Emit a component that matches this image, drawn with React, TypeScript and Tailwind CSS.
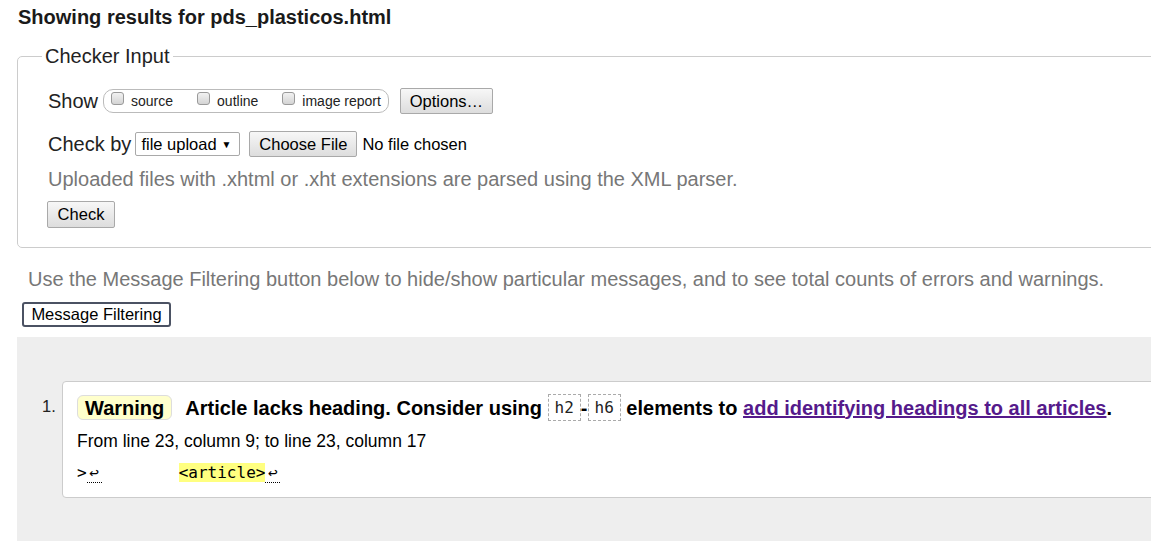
import React from 'react'

const sans = "font-['Liberation_Sans',Arial,sans-serif]"
const mono = "font-['DejaVu_Sans_Mono',Consolas,monospace]"

// grey gradient push button, like the old Chrome default
const btn =
  'flex items-center justify-center border border-[#a9a9a9] rounded-[2px] bg-linear-to-b from-[#f7f7f7] to-[#dddddd] text-[16.5px] leading-none text-black'

function FakeCheckbox({ label }: { label: string }) {
  return (
    <span className="flex items-center gap-[7px]">
      <span className="-mt-[5px] w-[13px] h-[13px] rounded-[3px] border border-[#9a9a9a] bg-linear-to-b from-[#f2f2f2] to-[#d4d4d4]" />
      <span className="text-[14px] leading-none text-[#222]">{label}</span>
    </span>
  )
}

function CodeTag({ children }: { children: React.ReactNode }) {
  return (
    <span
      className={`${mono} inline-flex items-center h-[27px] px-[6px] border border-dashed border-[#aaa] text-[16px] font-normal text-[#222]`}
    >
      {children}
    </span>
  )
}

function ReturnMark() {
  return <span className="inline-block w-[15px] border-b border-dotted border-black text-center">↩</span>
}

export default function App() {
  return (
    <div className={`${sans} w-[1151px] h-[559px] overflow-hidden bg-white text-[#222]`}>
      <div className="w-[1260px] pl-[17px]">
        <h2 className="pt-[6px] pl-[1px] text-[20px] leading-[23px] font-bold text-[#1a1a1a]">
          Showing results for pds_plasticos.html
        </h2>

        {/* Checker input form */}
        <fieldset className="mt-[15px] border border-[#ccc] rounded-[5px]">
          <legend className="ml-[24px] px-[3px] text-[20px] leading-[24px] text-[#222]">Checker Input</legend>
          <div className="pl-[30px] pt-[20px] pb-[19px]">
            <div className="flex items-center h-[26px]">
              <span className="text-[20px] leading-none">Show</span>
              <div className="ml-[5px] h-[24px] flex items-center gap-[24px] px-[7px] border border-[#bbb] rounded-[10px]">
                <FakeCheckbox label="source" />
                <FakeCheckbox label="outline" />
                <FakeCheckbox label="image report" />
              </div>
              <div className={`${btn} ml-[11px] w-[93px] h-[26px]`}>Options…</div>
            </div>

            <div className="mt-[17px] flex items-center h-[26px]">
              <span className="text-[20px] leading-none">Check by</span>
              <div className="ml-[4px] w-[105px] h-[24px] flex items-center justify-between px-[5px] border border-[#a9a9a9] rounded-[2px] bg-white text-[16.5px] text-black">
                <span>file upload</span>
                <span className="text-[10px] pr-[3px]">▼</span>
              </div>
              <div className={`${btn} ml-[9px] w-[108px] h-[26px]`}>Choose File</div>
              <span className="ml-[5px] text-[16.5px] text-black">No file chosen</span>
            </div>

            <p className="mt-[11px] text-[20px] leading-[23px] text-[#777]">
              Uploaded files with .xhtml or .xht extensions are parsed using the XML parser.
            </p>

            <div className={`${btn} mt-[10px] -ml-[1px] w-[68px] h-[27px]`}>Check</div>
          </div>
        </fieldset>

        <p className="mt-[20px] pl-[11px] text-[20px] leading-[23px] text-[#777]">
          Use the Message Filtering button below to hide/show particular messages, and to see total counts of errors and
          warnings.
        </p>
        <div className="mt-[11px] ml-[5px] w-[149px] h-[25px] flex items-center justify-center border-2 border-[#4b5263] rounded-[3px] bg-white text-[16.5px] text-black">
          Message Filtering
        </div>

        {/* results */}
        <div className="mt-[10px] h-[204px] bg-[#eee] pt-[44px]">
          <ol className="flex">
            <li className="w-[45px] pl-[25px] pt-[16px] text-[16.5px] leading-[19px] text-[#222]">1.</li>
            <li className="flex-1 h-[117px] bg-white border border-[#ccc] rounded-[4px] px-[14px] pt-[12px]">
              <div className="flex items-center h-[27px] text-[20px] font-bold text-black whitespace-pre">
                <span className="h-[25px] flex items-center px-[7px] bg-[#ffffcc] border border-[#ddd] rounded-[6px]">
                  Warning
                </span>
                <span className="ml-[13px]">Article lacks heading. Consider using </span>
                <CodeTag>h2</CodeTag>
                <span>-</span>
                <CodeTag>h6</CodeTag>
                <span> elements to </span>
                <span className="text-[#551a8b] underline">add identifying headings to all articles</span>
                <span>.</span>
              </div>
              <p className="mt-[10px] text-[17.5px] leading-[20px] text-black">
                From line 23, column 9; to line 23, column 17
              </p>
              <p className={`${mono} mt-[12px] text-[16px] leading-[19px] text-black whitespace-pre`}>
                {'>'}
                <ReturnMark />
                {'        '}
                <span className="bg-[#ffff80]">{'<article>'}</span>
                <ReturnMark />
              </p>
            </li>
          </ol>
        </div>
      </div>
    </div>
  )
}
